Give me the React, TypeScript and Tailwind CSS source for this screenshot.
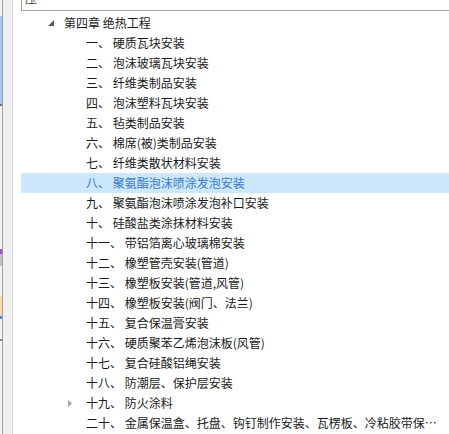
const items: string[][] = [
  ['一、', '硬质瓦块安装'],
  ['二、', '泡沫玻璃瓦块安装'],
  ['三、', '纤维类制品安装'],
  ['四、', '泡沫塑料瓦块安装'],
  ['五、', '毡类制品安装'],
  ['六、', '棉席(被)类制品安装'],
  ['七、', '纤维类散状材料安装'],
  ['八、', '聚氨酯泡沫喷涂发泡安装'],
  ['九、', '聚氨酯泡沫喷涂发泡补口安装'],
  ['十、', '硅酸盐类涂抹材料安装'],
  ['十一、', '带铝箔离心玻璃棉安装'],
  ['十二、', '橡塑管壳安装(管道)'],
  ['十三、', '橡塑板安装(管道,风管)'],
  ['十四、', '橡塑板安装(阀门、法兰)'],
  ['十五、', '复合保温膏安装'],
  ['十六、', '硬质聚苯乙烯泡沫板(风管)'],
  ['十七、', '复合硅酸铝绳安装'],
  ['十八、', '防潮层、保护层安装'],
  ['十九、', '防火涂料'],
  ['二十、', '金属保温盒、托盘、钩钉制作安装、瓦楞板、冷粘胶带保温、铝箔胶带'],
];

export default function App() {
  return (
    <div
      className="w-[449px] h-[434px] flex overflow-hidden bg-white text-[12px] text-[#1a1a1a]"
      style={{ fontFamily: '"Microsoft YaHei", "Noto Sans CJK SC", sans-serif' }}
    >
      {/* bits of the window behind */}
      <div className="w-[2px] flex flex-col bg-[#f4f4f4]">
        <div className="h-[16px]" />
        <div className="h-[88px] bg-[#a9c8f0]" />
        <div className="h-[2px] bg-[#707070]" />
        <div className="h-[143px]" />
        <div className="h-[5px] bg-[#a050c0]" />
        <div className="h-[12px] bg-[#c0c0c0]" />
        <div className="h-[30px]" />
        <div className="h-[20px] bg-[#fbdcb0]" />
        <div className="h-[3px] bg-[#3d8be8]" />
        <div className="h-[20px]" />
        <div className="h-[2px] bg-[#808080]" />
      </div>
      <div className="w-px bg-[#a0a0a0]" />
      <div className="w-[9px] bg-[#f0f0f0]" />
      <div className="w-px bg-[#dadada]" />

      <div className="flex-1 min-w-0 pl-[8px]">
        <div className="h-[11px] border-l border-b border-[#a0a0a0] overflow-hidden pl-[3px]">
          <span className="block -mt-[9px] leading-[16px] text-[#444]">压</span>
        </div>

        <div className="mt-[2px]">
          <div className="h-[20px] flex items-center">
            <div className="w-[27px] shrink-0" />
            <svg width="6" height="6" viewBox="0 0 6 6" className="shrink-0">
              <polygon points="6,0 6,6 0,6" fill="#5a5a5a" />
            </svg>
            <span className="ml-[10px] whitespace-nowrap">第四章 绝热工程</span>
          </div>

          {items.map(([num, name], i) => {
            const selected = i === 7;
            const collapsed = i === 18;
            return (
              <div
                key={num}
                className={`h-[20px] flex items-center pr-[2px] ${selected ? 'bg-[#cce8ff] text-[#3b78d0]' : ''}`}
              >
                <div className="w-[65px] shrink-0 flex items-center pl-[47px]">
                  {collapsed && (
                    <svg width="4" height="7" viewBox="0 0 4 7">
                      <polygon points="0,0 4,3.5 0,7" fill="#a6a6a6" />
                    </svg>
                  )}
                </div>
                <div className="min-w-0 truncate">
                  {num} {name}
                </div>
              </div>
            );
          })}
        </div>
      </div>
    </div>
  );
}
